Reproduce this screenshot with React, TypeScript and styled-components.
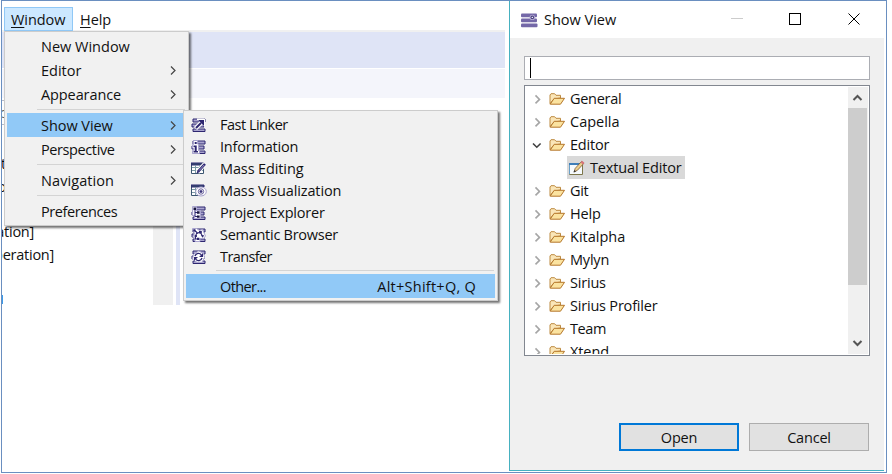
import React from 'react';
import styled, { createGlobalStyle, css } from 'styled-components';

const Global = createGlobalStyle`
  * { box-sizing: border-box; }
  body { margin: 0; background: #fff; }
`;

const Screen = styled.div`
  position: relative;
  width: 892px;
  height: 474px;
  padding-left: 1px;
  background: #fff;
  color: #111;
  font: 14.5px/24px "Open Sans", "Noto Sans", sans-serif;
  letter-spacing: -0.2px;
  white-space: nowrap;
  overflow: hidden;
`;
const Frame = styled.div`
  display: flex;
  width: 886px;
  height: 473px;
  border: 1px solid #6a8fc0;
`;
const Workbench = styled.div`
  width: 507px;
  display: flex;
  flex-direction: column;
`;
const MenuBar = styled.div`
  display: flex;
  width: 503px;
  height: 31px;
  padding: 6px 0 0 2px;
  border-bottom: 2px solid #f0f0f0;
  letter-spacing: -0.05px;
  u { text-underline-offset: 2px; text-decoration-thickness: 1px; }
`;
const BarItem = styled.div<{ $open?: boolean }>`
  height: 24px;
  padding: 0 6px;
  border: 1px solid transparent;
  line-height: 24px;
  ${p => p.$open && css`width: 69px; background: #cce8ff; border-color: #90c8f6;`}
`;
const Stripe = styled.div<{ $h: number; $color: string }>`
  width: 503px;
  height: ${p => p.$h}px;
  margin-bottom: 1px;
  background: ${p => p.$color};
  flex: none;
`;
const EditorArea = styled.div`
  display: flex;
  width: 503px;
  height: 206px;
`;
const Outline = styled.div`
  width: 151px;
  display: flex;
  flex-direction: column;
  overflow: hidden;
`;
const OutlineRow = styled.div<{ $w: number; $h?: number; $ruled?: boolean }>`
  display: flex;
  justify-content: flex-end;
  flex: none;
  width: ${p => p.$w}px;
  height: ${p => p.$h ?? 23}px;
  line-height: 23px;
  letter-spacing: -0.25px;
  overflow: hidden;
  ${p => p.$ruled && css`border: solid #b8bcc8; border-width: 1px 0; color: #666;`}
`;
const OutlineGap = styled.div<{ $h: number }>`height: ${p => p.$h}px; flex: none;`;
const SelectionEdge = styled.div`width: 1px; height: 9px; border-right: 1px solid #3c9bea; flex: none;`;
const Gutter = styled.div`width: 20px; background: #f0f0f0;`;
const Sash = styled.div`width: 4px; margin-left: 3px; background: #dfe4f6;`;

const Menu = styled.div<{ $x: number; $y: number; $w: number }>`
  position: absolute;
  left: ${p => p.$x}px;
  top: ${p => p.$y}px;
  width: ${p => p.$w}px;
  padding: 2px;
  border: 1px solid #ccc;
  background: #f1f1f1;
  box-shadow: 2px 2px 2px rgba(0, 0, 0, 0.55);
`;
const MenuRow = styled.div<{ $h?: number; $active?: boolean }>`
  display: grid;
  grid-template-columns: 34px 1fr auto;
  align-items: center;
  height: ${p => p.$h ?? 24}px;
  line-height: ${p => p.$h ?? 24}px;
  padding-right: 9px;
  background: ${p => (p.$active ? '#91c9f7' : 'transparent')};
  svg { display: block; margin-left: 5px; }
`;
const MenuText = styled.span<{ $track?: number }>`
  padding-top: 1px;
  letter-spacing: ${p => p.$track ?? -0.2}px;
`;
const Shortcut = styled.span`padding: 1px 10px 0 0; letter-spacing: 0.25px;`;
const Separator = styled.div`height: 1px; margin: 3px 1px 3px 30px; background: #d4d4d4;`;

const Dialog = styled.section`
  display: flex;
  flex-direction: column;
  width: 375px;
  height: 470px;
  border-left: 1px solid #46b1c0;
  border-bottom: 1px solid #46b1c0;
  background: #f0f0f0;
`;
const TitleBar = styled.header`
  display: flex;
  align-items: center;
  height: 37px;
  padding-left: 10px;
  background: #fff;
`;
const Title = styled.span`flex: 1; padding-left: 6px; margin-top: 1px; letter-spacing: 0;`;
const Filter = styled.div`
  height: 24px;
  margin: 18px 14px 5px;
  padding: 1px 5px;
  border: 1px solid #abadb3;
  background: #fff;
`;
const Caret = styled.div`width: 1px; height: 20px; background: #000;`;
const TreeBox = styled.div`
  display: flex;
  height: 271px;
  margin: 0 14px;
  padding: 1px;
  border: 1px solid #828790;
  background: #fff;
`;
const Tree = styled.div`flex: 1; overflow: hidden;`;
const TreeRow = styled.div`
  display: flex;
  align-items: center;
  gap: 2px;
  height: 23px;
  line-height: 23px;
  padding-left: 5px;
`;
const FolderLabel = styled.span<{ $track?: number }>`
  padding-left: 3px;
  letter-spacing: ${p => p.$track ?? -0.2}px;
`;
const Child = styled.div`
  display: flex;
  align-items: center;
  gap: 2px;
  width: 118px;
  height: 23px;
  margin-left: 41px;
  padding-left: 2px;
  background: #d9d9d9;
`;
const ScrollBar = styled.div`
  display: flex;
  flex-direction: column;
  width: 20px;
  height: 267px;
  background: #f0f0f0;
`;
const Thumb = styled.div`width: 19px; height: 177px; background: #cdcdcd;`;
const ScrollSpace = styled.div`flex: 1;`;
const Actions = styled.footer`
  display: flex;
  justify-content: flex-end;
  gap: 10px;
  margin: 67px 15px 0 0;
`;
const Button = styled.button<{ $primary?: boolean }>`
  width: 120px;
  height: 28px;
  padding: 1px 0 0;
  border: ${p => (p.$primary ? '2px solid #0078d7' : '1px solid #adadad')};
  background: #e1e1e1;
  color: #111;
  font: inherit;
  line-height: 22px;
  letter-spacing: -0.2px;
`;

const Chevron = () => (
  <svg width="8" height="12" viewBox="0 0 8 12" fill="none" stroke="#444" strokeWidth="1.2"><path d="M2 1.5l4 4-4 4" /></svg>
);
const Twisty = ({ open }: { open?: boolean }) => (
  <svg width="16" height="16" viewBox="0 0 16 16" fill="none" stroke={open ? '#404040' : '#a6a6a6'} strokeWidth="1.6">
    <path d={open ? 'M2 6.5l3.8 3.7 3.8-3.7' : 'M4.5 4.4l4 4-4 4'} />
  </svg>
);
const Folder = () => (
  <svg width="16" height="16" viewBox="0 0 16 16" strokeLinejoin="round">
    <path d="M1 12.5V4l1-1.3h3.6L7 4.3h4.5V7L5 8z" fill="#fae6b8" stroke="#bd8a40" />
    <path d="M1.2 13.2L5.2 7.3h10.3l-4 5.9z" fill="#fbe3a0" stroke="#b4762a" />
  </svg>
);
const TextIcon = () => (
  <svg width="16" height="16" viewBox="0 0 16 16">
    <path d="M.5 3.5h13v11H.5z" fill="#f6fafd" stroke="#7d7649" />
    <path d="M0 3h10v2H0z" fill="#3e7eb8" />
    <path d="M.5 5v9" stroke="#6aa0c8" />
    <path d="M5 12l1.2-3.6L12.6 1.4l2.2 2-6.5 7z" fill="#eed08c" stroke="#77583a" strokeWidth=".8" />
    <path d="M11.6 2.5l1.4-1.7 2.4 2-1.5 1.7z" fill="#d9737a" />
    <path d="M4.5 12.5l1-2.5 1.5 1.5z" fill="#333" />
  </svg>
);
const AppLogo = () => (
  <svg width="18" height="16" viewBox="0 0 18 16" fill="#7468a8">
    <rect x="1" y="1.6" width="16" height="3.6" rx="1" />
    <rect x="1" y="6.4" width="16" height="3.8" rx="1" />
    <rect x="1" y="11.4" width="16.5" height="3.8" rx="1" />
    <circle cx="12.3" cy="5.4" r="2.7" fill="#b5add2" />
    <circle cx="12.3" cy="5.4" r="1.8" fill="#4a4180" />
    <circle cx="12.3" cy="5.4" r=".7" fill="#fff" />
  </svg>
);

type IconKind = 'link' | 'info' | 'edit' | 'visual' | 'project' | 'semantic' | 'transfer';
const Bars = () => <path d="M2 2h12v3H2zM1 7h12v3H1zM2 12h12v2.5H2z" fill="#aaa5cf" />;
const Grid = () => (
  <>
    <path d="M.5 2.5h12v10H.5z" fill="#fff" stroke="#3b5570" />
    <path d="M0 2h13v2H0z" fill="#3b5570" />
    <path d="M1 6.5h11M1 9.5h11M4.5 4v8M8.5 4v8" stroke="#7c9aa5" />
  </>
);
const ViewIcon = ({ kind }: { kind: IconKind }) => (
  <svg width="16" height="16" viewBox="0 0 16 16" fill="none" stroke="#2d2670">
    {kind !== 'edit' && kind !== 'visual' ? <Bars /> : <Grid />}
    {kind === 'link' && (
      <>
        <path d="M4.5 11.5l6-6" stroke="#fff" strokeWidth="4.5" />
        <path d="M6 2h7.5v7.5z" fill="#fff" stroke="#fff" />
        <path d="M5 11l5-5" strokeWidth="2" />
        <path d="M7 3h6v6z" fill="#2d2670" stroke="none" />
      </>
    )}
    {kind === 'info' && (
      <>
        <path d="M2.5 1.5h4v3.5h1v6.5h1V14.5h-7V11.5h1V9h-1V5.5h1z" fill="#fff" stroke="#aaa5cf" />
        <path d="M3.7 3h2v2h-2zM2.5 6.5h3.2V12h1.3v1.5H2.5V12h1.2V8H2.5z" fill="#2d2670" stroke="none" />
      </>
    )}
    {kind === 'edit' && (
      <>
        <path d="M6.5 11.3L14 2.6" stroke="#fff" strokeWidth="4.4" />
        <path d="M7 10.7L14 3" strokeWidth="2.6" />
        <path d="M8.2 9.5l5-5.5" stroke="#a9a2ce" strokeWidth=".9" />
        <path d="M5.5 12.5l.8-2.8 2 1.6z" fill="#2d2670" stroke="none" />
      </>
    )}
    {kind === 'visual' && (
      <>
        <ellipse cx="10" cy="8.5" rx="5.3" ry="4.5" fill="#fff" stroke="#a9a3ce" />
        <circle cx="10" cy="8.5" r="2.7" fill="#fff" stroke="#6e669f" />
        <path d="M8.5 8.5h3M10 7v3" stroke="#3b347c" strokeWidth="1.4" />
      </>
    )}
    {kind === 'project' && (
      <>
        <path d="M1.5 1.5h4v4h4v8h-6v-3h-2z" fill="#f3f2fa" stroke="#aaa5cf" />
        <path d="M4 4v7.5h3M4 7.5h3" />
        <path d="M2.5 2.5H5V5H2.5zM6 6.3h2.6v2.4H6zM6 10.4h2.6v2.4H6z" fill="#17133f" stroke="none" />
      </>
    )}
    {kind === 'semantic' && (
      <>
        <path d="M1.5 1.5h4l3 2 3-1 3 6.5-2 2.5H9v3H4v-3l-2-2 1.5-3z" fill="#fff" stroke="#aaa5cf" />
        <path d="M3 3l3 2.5L4.5 9v3H7M6 6.5l3-1.5 2.5 4" strokeWidth="1.1" />
        <path d="M2.3 2.3h2.2v2.2H2.3zM8 4h2.8v2.4H8zM6 10.7h2.4v2.3H6zM9.8 8.2h3.4l-1.5 2.5zM3.6 8h2.3v2H3.6z" fill="#2d2670" stroke="none" />
      </>
    )}
    {kind === 'transfer' && (
      <>
        <path d="M7.5 2l5 2.2 1 4.3-2.5 4.8H6L1.6 10.5l.8-5z" fill="#fff" stroke="#aaa5cf" />
        <path d="M4 7c1-3 4.5-3.6 6.3-1.2M11 9c-1 3-4.5 3.6-6.3 1.2" strokeWidth="1.3" />
        <path d="M12 4v4H8zM3 12V8h4z" fill="#2d2670" stroke="none" />
      </>
    )}
  </svg>
);

const views: [IconKind, string, number][] = [
  ['link', 'Fast Linker', -0.5], ['info', 'Information', -0.2], ['edit', 'Mass Editing', -0.12],
  ['visual', 'Mass Visualization', -0.12], ['project', 'Project Explorer', -0.2],
  ['semantic', 'Semantic Browser', -0.27], ['transfer', 'Transfer', -0.6],
];
const windowMenu: { label?: string; sub?: boolean; active?: boolean; track?: number }[] = [
  { label: 'New Window', track: 0 }, { label: 'Editor', sub: true, track: 0 },
  { label: 'Appearance', sub: true, track: -0.1 }, {},
  { label: 'Show View', sub: true, active: true, track: -0.05 }, { label: 'Perspective', sub: true, track: -0.4 }, {},
  { label: 'Navigation', sub: true, track: 0.08 }, {}, { label: 'Preferences', track: -0.4 },
];
const folders: [string, number][] = [
  ['General', -0.3], ['Capella', 0], ['Editor', -0.2], ['Git', -0.4], ['Help', -0.2], ['Kitalpha', 0],
  ['Mylyn', -0.2], ['Sirius', -0.2], ['Sirius Profiler', -0.2], ['Team', -0.4], ['Xtend', -0.1],
];

export default function App() {
  return (
    <Screen>
      <Global />
      <Frame>
        <Workbench>
          <MenuBar>
            <BarItem $open><u>W</u>indow</BarItem>
            <BarItem><u>H</u>elp</BarItem>
          </MenuBar>
          <Stripe $h={36} $color="#dfe4f6" />
          <Stripe $h={29} $color="#f4f5fb" />
          <EditorArea>
            <Outline>
              <OutlineGap $h={1} />
              <OutlineRow $w={4} $h={25} $ruled>c</OutlineRow>
              <OutlineGap $h={27} />
              <OutlineRow $w={4}>at</OutlineRow>
              <OutlineRow $w={4}>o</OutlineRow>
              <OutlineGap $h={22} />
              <OutlineRow $w={32}>ration]</OutlineRow>
              <OutlineRow $w={52}>peration]</OutlineRow>
              <OutlineGap $h={29} />
              <SelectionEdge />
            </Outline>
            <Gutter />
            <Sash />
          </EditorArea>
        </Workbench>
        <Dialog>
          <TitleBar>
            <AppLogo />
            <Title>Show View</Title>
            <svg width="154" height="20" viewBox="0 0 154 20" fill="none" stroke="#000" shapeRendering="crispEdges">
              <path d="M1 8.5h12" stroke="#ccc" />
              <path d="M59.5 3.5h11v11h-11z" />
              <path d="M118.5 3.5l11 11M129.5 3.5l-11 11" shapeRendering="auto" />
            </svg>
          </TitleBar>
          <Filter><Caret /></Filter>
          <TreeBox>
            <Tree>
              {folders.map(([name, track]) => (
                <React.Fragment key={name}>
                  <TreeRow><Twisty open={name === 'Editor'} /><Folder /><FolderLabel $track={track}>{name}</FolderLabel></TreeRow>
                  {name === 'Editor' && <Child><TextIcon /><FolderLabel $track={-0.15}>Textual Editor</FolderLabel></Child>}
                </React.Fragment>
              ))}
            </Tree>
            <ScrollBar>
              <svg width="20" height="21" viewBox="0 0 20 21" fill="none" stroke="#555" strokeWidth="2"><path d="M5.5 13l4-4 4 4" /></svg>
              <Thumb />
              <ScrollSpace />
              <svg width="20" height="21" viewBox="0 0 20 21" fill="none" stroke="#555" strokeWidth="2"><path d="M5.5 8l4 4 4-4" /></svg>
            </ScrollBar>
          </TreeBox>
          <Actions>
            <Button $primary>Open</Button>
            <Button>Cancel</Button>
          </Actions>
        </Dialog>
      </Frame>
      <Menu $x={4} $y={31} $w={185}>
        {windowMenu.map((m, i) => m.label ? (
          <MenuRow key={i} $active={m.active}><span /><MenuText $track={m.track}>{m.label}</MenuText>{m.sub && <Chevron />}</MenuRow>
        ) : <Separator key={i} />)}
      </Menu>
      <Menu $x={183} $y={110} $w={315}>
        {views.map(([kind, label, track]) => (
          <MenuRow key={kind} $h={22}><ViewIcon kind={kind} /><MenuText $track={track}>{label}</MenuText></MenuRow>
        ))}
        <Separator />
        <MenuRow $active><span /><MenuText $track={-0.6}>Other...</MenuText><Shortcut>Alt+Shift+Q, Q</Shortcut></MenuRow>
      </Menu>
    </Screen>
  );
}
